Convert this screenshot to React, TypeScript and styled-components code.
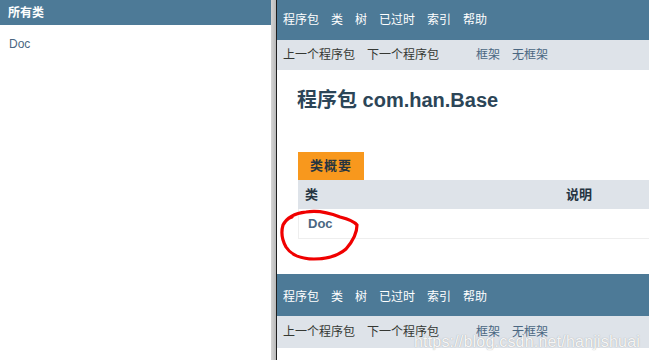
import React from 'react'
import styled, { createGlobalStyle } from 'styled-components'

const GlobalStyle = createGlobalStyle`
  html, body {
    margin: 0;
    padding: 0;
    background: #ffffff;
  }
  body {
    font-family: "Liberation Sans", Arial, "Noto Sans CJK SC", sans-serif;
    color: #353833;
  }
`

const Frames = styled.div`
  display: flex;
  width: 649px;
  height: 360px;
  overflow: hidden;
  position: relative;
`

const LeftFrame = styled.div`
  width: 271px;
  flex-shrink: 0;
  background: #ffffff;
`

const LeftHeader = styled.div`
  height: 25px;
  background: #4d7a97;
  color: #ffffff;
  font-size: 12px;
  font-weight: bold;
  line-height: 27px;
  padding-left: 8px;
`

const ClassList = styled.ul`
  list-style: none;
  margin: 0;
  padding: 12px 0 0 9px;
`

const ClassItem = styled.li`
  font-size: 12px;
  line-height: 14px;
  color: #4a6782;
`

const Splitter = styled.div`
  width: 5px;
  flex-shrink: 0;
  background: linear-gradient(to right, #d4d4d4, #c4c4c4 60%, #b8b8b8);
  border-right: 1px solid #1e1e1e;
`

const RightFrame = styled.div`
  flex: 1;
  min-width: 0;
  display: flex;
  flex-direction: column;
  background: #ffffff;
`

const TopNav = styled.ul<{ $h: number; $pad?: number }>`
  list-style: none;
  margin: 0;
  flex-shrink: 0;
  height: ${({ $h }) => $h}px;
  box-sizing: border-box;
  padding: ${({ $pad }) => $pad || 0}px 0 0 6px;
  background: #4d7a97;
  display: flex;
  align-items: center;
  gap: 12px;
`

const TopNavItem = styled.li`
  color: #ffffff;
  font-size: 12px;
  line-height: 14px;
`

const SubNav = styled.ul<{ $h: number }>`
  list-style: none;
  margin: 0;
  flex-shrink: 0;
  height: ${({ $h }) => $h}px;
  padding: 0 0 0 6px;
  background: #dee3e9;
  display: flex;
  align-items: center;
  gap: 12px;
`

const SubNavItem = styled.li<{ $link?: boolean; $gapBefore?: number }>`
  font-size: 12px;
  line-height: 14px;
  color: ${({ $link }) => ($link ? '#4a6782' : '#353833')};
  margin-left: ${({ $gapBefore }) => $gapBefore || 0}px;
`

const Header = styled.div`
  flex-shrink: 0;
  box-sizing: border-box;
  padding: 18px 0 0 20px;
  height: 82px;
`

const Title = styled.h1`
  margin: 0;
  font-size: 20px;
  line-height: 24px;
  font-weight: bold;
  color: #2c4557;
`

const Summary = styled.div`
  flex-shrink: 0;
  margin: 0 0 35px 21px;
  position: relative;
`

const Caption = styled.div`
  width: 66px;
  height: 28px;
  background: #f8981d;
  color: #253441;
  font-size: 13px;
  font-weight: bold;
  line-height: 28px;
  text-align: center;
  letter-spacing: 1px;
`

const HeadRow = styled.div`
  display: flex;
  height: 29px;
  align-items: center;
  background: #dee3e9;
`

const HeadCell = styled.div<{ $w?: number; $pl: number }>`
  width: ${({ $w }) => ($w ? `${$w}px` : 'auto')};
  flex: ${({ $w }) => ($w ? 'none' : '1')};
  padding-left: ${({ $pl }) => $pl}px;
  box-sizing: border-box;
  font-size: 13px;
  font-weight: bold;
  line-height: 16px;
  color: #253441;
`

const BodyRow = styled.div`
  display: flex;
  height: 29px;
  align-items: center;
  border-left: 1px solid #eeeeee;
  border-bottom: 1px solid #eeeeee;
`

const ClassLink = styled.span`
  padding-left: 9px;
  font-size: 13px;
  font-weight: bold;
  line-height: 16px;
  color: #4a6782;
`

const Circle = styled.svg`
  position: absolute;
  left: -20px;
  top: 57px;
  pointer-events: none;
`

const Watermark = styled.div`
  position: absolute;
  right: 9px;
  bottom: 9px;
  font-family: "Liberation Sans", Arial, sans-serif;
  font-size: 16px;
  line-height: 18px;
  color: rgba(255, 255, 255, 0.92);
  text-shadow: 0 0 1px rgba(120, 120, 120, 0.7);
  letter-spacing: 0.2px;
`

const navItems = ['程序包', '类', '树', '已过时', '索引', '帮助']

const SubNavBar = ({ h }: { h: number }) => (
  <SubNav $h={h}>
    <SubNavItem>上一个程序包</SubNavItem>
    <SubNavItem>下一个程序包</SubNavItem>
    <SubNavItem $link $gapBefore={25}>框架</SubNavItem>
    <SubNavItem $link>无框架</SubNavItem>
  </SubNav>
)

const App = () => {
  return (
    <Frames>
      <GlobalStyle />
      <LeftFrame>
        <LeftHeader>所有类</LeftHeader>
        <ClassList>
          <ClassItem>Doc</ClassItem>
        </ClassList>
      </LeftFrame>
      <Splitter />
      <RightFrame>
        <TopNav $h={40}>
          {navItems.map((n) => (
            <TopNavItem key={n}>{n}</TopNavItem>
          ))}
        </TopNav>
        <SubNavBar h={30} />
        <Header>
          <Title>程序包 com.han.Base</Title>
        </Header>
        <Summary>
          <Caption>类概要</Caption>
          <HeadRow>
            <HeadCell $w={261} $pl={7}>类</HeadCell>
            <HeadCell $pl={7}>说明</HeadCell>
          </HeadRow>
          <BodyRow>
            <ClassLink>Doc</ClassLink>
          </BodyRow>
          {/* hand drawn red mark around the class link */}
          <Circle width="84" height="52" viewBox="0 0 84 52">
            <path
              d="M5 16 C9 8 18 4 28 3 C40 1 52 4 62 8 C70 10 76 12 79 16 C79 23 75 32 68 40 C60 47 48 50 36 50 C24 50 13 46 8 38 C4 31 3 23 5 16 C7 12 11 9 14 8"
              fill="none"
              stroke="#f00000"
              strokeWidth="3.2"
              strokeLinecap="round"
            />
          </Circle>
        </Summary>
        <TopNav $h={42} $pad={4}>
          {navItems.map((n) => (
            <TopNavItem key={n}>{n}</TopNavItem>
          ))}
        </TopNav>
        <SubNavBar h={32} />
      </RightFrame>
      <Watermark>https://blog.csdn.net/hanjishuai</Watermark>
    </Frames>
  )
}

export default App
